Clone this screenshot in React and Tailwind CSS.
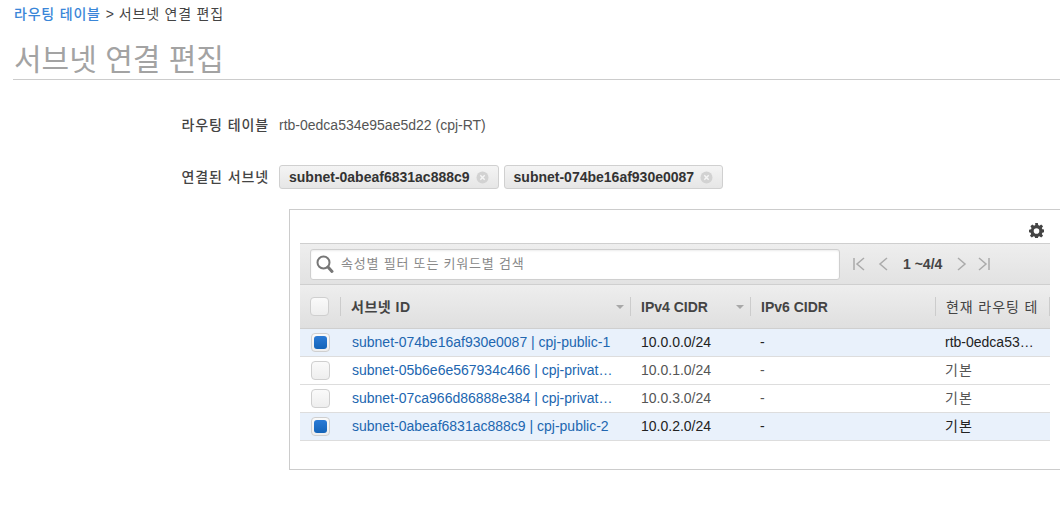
import React from 'react';

const FONT = "font-['Liberation_Sans','Noto_Sans_CJK_KR',sans-serif]";

const ROWS = [
  { id: 'subnet-074be16af930e0087 | cpj-public-1', cidr: '10.0.0.0/24', route: 'rtb-0edca53…', checked: true },
  { id: 'subnet-05b6e6e567934c466 | cpj-privat…', cidr: '10.0.1.0/24', route: '기본', checked: false },
  { id: 'subnet-07ca966d86888e384 | cpj-privat…', cidr: '10.0.3.0/24', route: '기본', checked: false },
  { id: 'subnet-0abeaf6831ac888c9 | cpj-public-2', cidr: '10.0.2.0/24', route: '기본', checked: true },
];

function Chip({ label }) {
  return (
    <span className="flex h-6 items-center gap-[6px] rounded-[3px] border border-[#d0d0d0] bg-gradient-to-b from-[#f4f4f4] to-[#e6e6e6] pl-[9px] pr-[9px] text-sm font-bold text-[#333]">
      {label}
      <svg width="13" height="13" viewBox="0 0 13 13">
        <circle cx="6.5" cy="6.5" r="6" fill="#d2d2d2" />
        <path d="M4.3 4.3l4.4 4.4M8.7 4.3l-4.4 4.4" stroke="#f5f5f5" strokeWidth="1.5" />
      </svg>
    </span>
  );
}

function Checkbox({ checked }) {
  return (
    <span className="flex h-[19px] w-[19px] items-center justify-center rounded-[4px] border border-[#cfcfcf] bg-gradient-to-b from-[#fafafa] to-[#eeeeee]">
      {checked ? <span className="h-[13px] w-[13px] rounded-[3px] bg-gradient-to-b from-[#2b7bd6] to-[#1464b8]" /> : null}
    </span>
  );
}

function SortArrow() {
  return <span className="mr-[6px] ml-auto h-0 w-0 border-x-[4px] border-t-[4px] border-x-transparent border-t-[#a8a8a8]" />;
}

function PagerIcon({ d }) {
  return (
    <svg width="14" height="16" viewBox="0 0 14 16" fill="none" stroke="#aaaaaa" strokeWidth="1.5">
      <path d={d} />
    </svg>
  );
}

export default function App() {
  return (
    <div className={`${FONT} h-[509px] w-[1060px] overflow-hidden bg-white text-sm text-[#444]`}>
      <div className="flex pl-[14px] pt-[6px] text-sm leading-4 tracking-[0.8px]">
        <span className="font-medium text-[#3a86d8]">라우팅 테이블</span>
        <span className="ml-[5px] text-[#444]">&gt;</span>
        <span className="ml-[4px] text-[#444]">서브넷 연결 편집</span>
      </div>

      <h1 className="ml-[13px] mt-[14px] h-[44px] border-b border-[#cccccc] pl-px pt-[8px] text-[30px] leading-[32px] text-[#a3a3a3]">
        서브넷 연결 편집
      </h1>

      <div className="mt-[35px] flex h-5 items-center">
        <span className="w-[269px] text-right text-sm font-medium tracking-[0.9px] text-[#444]">라우팅 테이블</span>
        <span className="ml-[10px] text-sm text-[#555]">rtb-0edca534e95ae5d22 (cpj-RT)</span>
      </div>

      <div className="mt-[30px] flex items-center">
        <span className="w-[269px] text-right text-sm font-medium tracking-[0.9px] text-[#444]">연결된 서브넷</span>
        <div className="ml-[10px] flex gap-[5px]">
          <Chip label="subnet-0abeaf6831ac888c9" />
          <Chip label="subnet-074be16af930e0087" />
        </div>
      </div>

      <div className="ml-[289px] mt-[20px] h-[261px] w-[780px] border border-[#cccccc] pl-[10px]">
        <div className="flex h-[33px] w-[750px] items-start justify-end pt-[13px]">
          <svg width="15" height="15" viewBox="0 0 16 16" className="mr-[6px]">
            <path
              fill="#444"
              fillRule="evenodd"
              d="M6.6 0h2.8l.4 2.2 1.3.6L13 1.5l2 2-1.3 1.9.5 1.3 2.2.4v2.8l-2.2.4-.5 1.3 1.3 1.9-2 2-1.9-1.3-1.3.5-.4 2.2H6.6l-.4-2.2-1.3-.5L3 15.5l-2-2 1.3-1.9-.5-1.3L0 9.9V7.1l2.2-.4.5-1.3L1.5 3.5l2-2 1.9 1.3 1.3-.6L6.6 0zM8 5.5a3 3 0 1 0 0 6 3 3 0 0 0 0-6z"
            />
          </svg>
        </div>

        <div className="w-[750px]">
          <div className="flex h-[42px] items-center border-y border-[#cfcfcf] bg-gradient-to-b from-[#eeeeee] to-[#e2e2e2] pl-[10px]">
            <div className="flex h-[31px] w-[530px] items-center rounded-[3px] border border-[#cfcfcf] bg-white pl-[5px] shadow-[inset_0_1px_2px_rgba(0,0,0,0.08)]">
              <svg width="18" height="20" viewBox="0 0 18 20" fill="none" stroke="#777" strokeLinecap="round">
                <circle cx="7.5" cy="8.5" r="6" strokeWidth="2" />
                <path d="M12 13l4 4.5" strokeWidth="3" />
              </svg>
              <span className="ml-[7px] text-[13px] tracking-[0.8px] text-[#888]">속성별 필터 또는 키워드별 검색</span>
            </div>
            <div className="ml-[12px] flex items-center">
              <PagerIcon d="M2 2v12M12 2 5 8l7 6" />
              <span className="ml-[10px]"><PagerIcon d="M11 2 4 8l7 6" /></span>
              <span className="ml-[13px] text-sm font-bold text-[#444]">1 ~4/4</span>
              <span className="ml-[13px]"><PagerIcon d="M3 2l7 6-7 6" /></span>
              <span className="ml-[8px]"><PagerIcon d="M2 2l7 6-7 6M12 2v12" /></span>
            </div>
          </div>

          <div className="flex h-[44px] items-center border-b border-[#cfcfcf] bg-gradient-to-b from-[#eeeeee] to-[#dfdfdf] text-sm font-bold text-[#444]">
            <div className="flex h-[19px] w-[40px] items-center pl-[10px]"><Checkbox /></div>
            <div className="flex h-[19px] w-[290px] items-center border-l border-[#cccccc] pl-[10px]">
              <span className="tracking-[0.5px]">서브넷 ID</span>
              <SortArrow />
            </div>
            <div className="flex h-[19px] w-[120px] items-center border-l border-[#cccccc] pl-[10px]">
              IPv4 CIDR
              <SortArrow />
            </div>
            <div className="flex h-[19px] w-[185px] items-center border-l border-[#cccccc] pl-[10px]">IPv6 CIDR</div>
            <div className="flex h-[19px] w-[115px] items-center border-x border-[#cccccc] pl-[10px] font-normal tracking-[0.9px] whitespace-nowrap">
              현재 라우팅 테
            </div>
          </div>

          {ROWS.map((row) => (
            <div
              key={row.id}
              className={`flex h-[28px] items-center border-b border-[#dddddd] text-sm ${row.checked ? 'bg-[#e9f1fb] text-[#222]' : 'bg-white text-[#555]'}`}
            >
              <div className="w-[40px] pl-[11px]"><Checkbox checked={row.checked} /></div>
              <a className="w-[290px] pb-[2px] pl-[12px] text-[#2166b0]">{row.id}</a>
              <div className="w-[120px] pb-[2px] pl-[11px]">{row.cidr}</div>
              <div className="w-[185px] pb-[2px] pl-[10px]">-</div>
              <div className={`w-[115px] pb-[2px] pl-[10px] whitespace-nowrap ${row.route === '기본' ? 'tracking-[1px]' : ''}`}>{row.route}</div>
            </div>
          ))}
        </div>
      </div>
    </div>
  );
}
